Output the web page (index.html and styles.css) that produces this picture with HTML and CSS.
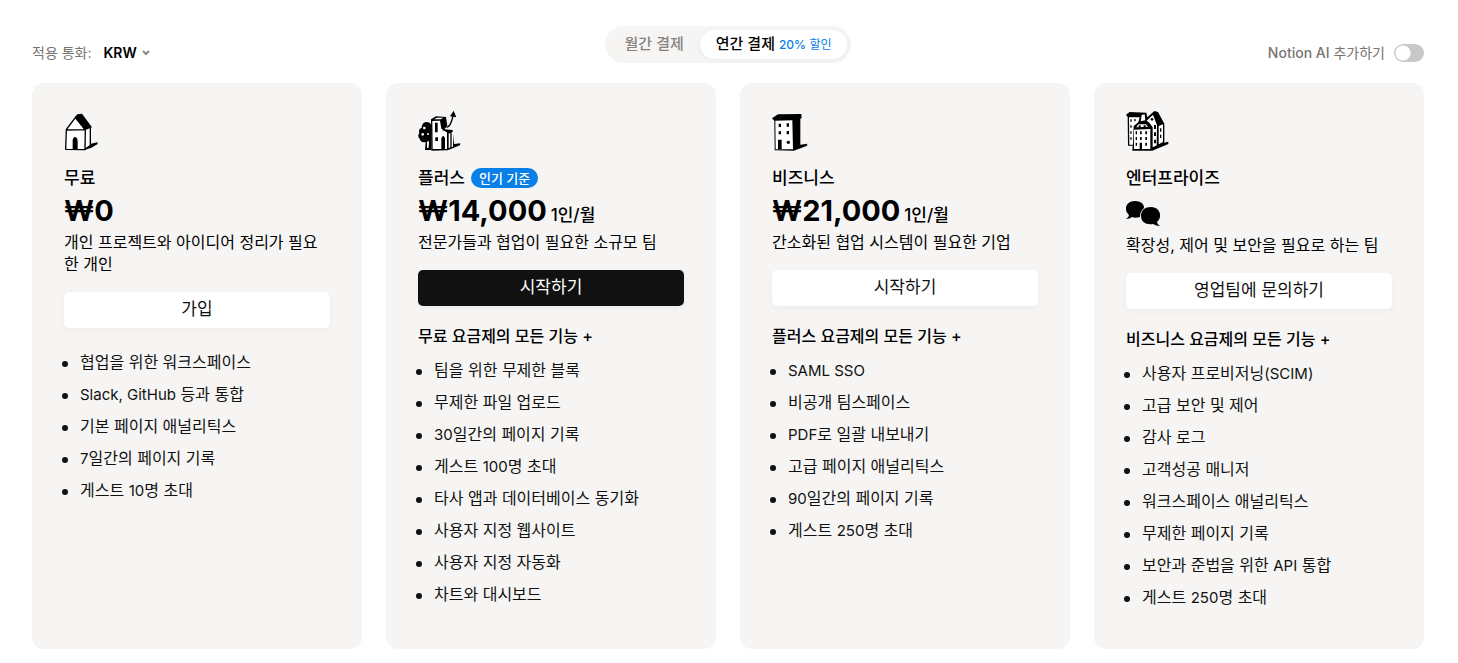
FILE: index.html
```html
<!DOCTYPE html>
<html lang="ko">
<head>
<meta charset="utf-8">
<meta name="viewport" content="width=device-width, initial-scale=1">
<title>요금제</title>
<link rel="stylesheet" href="styles.css">
</head>
<body>
<main class="page">
  <header class="toolbar">
    <div class="currency">
      <span>적용 통화:</span>
      <button class="currency-button" type="button">KRW
        <svg class="chevron" viewBox="0 0 8 6" aria-hidden="true"><path d="M1 1l3 3 3-3"/></svg>
      </button>
    </div>
    <div class="billing">
      <button class="billing-option" type="button">월간 결제</button>
      <button class="billing-option selected" type="button">연간 결제 <span class="discount"><span class="medium">20%</span> 할인</span></button>
    </div>
    <label class="ai"><span><span class="medium">Notion AI</span> 추가하기</span><input class="switch" type="checkbox" role="switch"></label>
  </header>

  <div class="plans">
    <section class="plan">
      <svg class="plan-icon" viewBox="27 24 132 132" aria-hidden="true">
        <path class="paper" d="M33 90L61 53 90 89 108 82 107 141 89 149 32 148z"/>
        <path class="ink" d="M60 50L70 43 81 41 111 82 90 91z"/>
        <path class="ink" d="M88 149L108 131 127 127 128 132 108 144z"/>
        <path class="paper" d="M91 93L106 85 105 136 91 146z"/>
        <path class="line" d="M33 90L61 53 90 89 34 90 32 148 90 149 91 91M61 53L70 43M106 84V137L90 148"/>
        <path class="ink" d="M53 148V122Q54 111 60 111T68 122V148z"/>
      </svg>
      <h2 class="plan-name">무료</h2>
      <p class="price">₩0</p>
      <p class="summary">개인 프로젝트와 아이디어 정리가 필요한 개인</p>
      <button class="action" type="button">가입</button>
      <ul class="features">
        <li>협업을 위한 워크스페이스</li>
        <li><span class="latin">Slack, GitHub</span> 등과 통합</li>
        <li>기본 페이지 애널리틱스</li>
        <li><span class="latin">7</span>일간의 페이지 기록</li>
        <li>게스트 <span class="latin">10</span>명 초대</li>
      </ul>
    </section>

    <section class="plan">
      <svg class="plan-icon" viewBox="24 24 132 132" aria-hidden="true">
        <path class="ink" d="M45 150L47 126Q34 130 29 117 21 108 28 99 24 87 35 83 35 68 49 66 60 66 64 76V150z"/>
        <circle class="paper" cx="43" cy="84" r="4"/><circle class="paper" cx="38" cy="103" r="4"/><circle class="paper" cx="54" cy="102" r="3"/><path class="paper" d="M51 125l6-2-1 20-5 1z"/>
        <path class="ink" d="M63 58L78 49 108 51 112 78 103 88 128 90 132 132 151 130 150 136 113 151 64 152z"/>
        <path class="paper" d="M67 63L90 62 94 86 111 97V147H68z"/>
        <path class="paper" d="M72 58L81 53 100 53 92 58zM116 101L121 98V142L116 145zM125 97L129 95V140L125 142z"/>
        <path class="ink" d="M75 68h8v29h-8zM76 112h8v11h-8zM94 147V115Q100 101 105 115V147zM96 90L113 90 127 94 113 97z"/>
        <path class="line" d="M110 82Q122 80 129 48"/>
        <path class="ink" d="M131 32L139 52 120 49z"/>
      </svg>
      <h2 class="plan-name">플러스 <span class="badge">인기 기준</span></h2>
      <p class="price">₩14,000 <span class="unit">1인/월</span></p>
      <p class="summary">전문가들과 협업이 필요한 소규모 팀</p>
      <button class="action primary" type="button">시작하기</button>
      <h3 class="includes">무료 요금제의 모든 기능 +</h3>
      <ul class="features">
        <li>팀을 위한 무제한 블록</li>
        <li>무제한 파일 업로드</li>
        <li><span class="latin">30</span>일간의 페이지 기록</li>
        <li>게스트 <span class="latin">100</span>명 초대</li>
        <li>타사 앱과 데이터베이스 동기화</li>
        <li>사용자 지정 웹사이트</li>
        <li>사용자 지정 자동화</li>
        <li>차트와 대시보드</li>
      </ul>
    </section>

    <section class="plan">
      <svg class="plan-icon" viewBox="21 24 132 132" aria-hidden="true">
        <path class="ink" d="M21 55L39 43 109 42 110 53 106 57V134L127 131 126 137 87 152 29 151 28 62z"/>
        <path class="paper" d="M31 62L82 61 84 148H32z"/>
        <path class="ink" d="M41 71h7v10h-7zM65 70h7v10h-7zM41 94h7v9h-7zM65 93h7v10h-7zM39 148V119h11V148z"/>
        <circle class="ink" cx="70" cy="127" r="5"/>
      </svg>
      <h2 class="plan-name">비즈니스</h2>
      <p class="price">₩21,000 <span class="unit">1인/월</span></p>
      <p class="summary">간소화된 협업 시스템이 필요한 기업</p>
      <button class="action" type="button">시작하기</button>
      <h3 class="includes">플러스 요금제의 모든 기능 +</h3>
      <ul class="features">
        <li><span class="latin">SAML SSO</span></li>
        <li>비공개 팀스페이스</li>
        <li><span class="latin">PDF</span>로 일괄 내보내기</li>
        <li>고급 페이지 애널리틱스</li>
        <li><span class="latin">90</span>일간의 페이지 기록</li>
        <li>게스트 <span class="latin">250</span>명 초대</li>
      </ul>
    </section>

    <section class="plan">
      <svg class="plan-icon" viewBox="24 24 132 132" aria-hidden="true">
        <path class="ink" d="M24 44L35 36 85 38 88 52 109 33 120 36 139 71V128L151 125 151 132 103 152H43L44 137H30L29 51z"/>
        <path class="paper" d="M33 52H65L61 67 47 78 45 134H34zM86 62L105 44 117 76 116 136 104 142V82L94 68zM122 78L135 73V126L122 133z"/>
        <path class="paper" d="M48 89L97 87V147H48zM61 73L84 73 90 80 55 82z"/>
        <path class="paper" d="M71 45L80 43 82 61 68 64z"/>
        <path class="ink" d="M37 58h4v7h-4zM49 57h4v7h-4zM37 76h4v7h-4zM37 94h4v7h-4zM37 112h4v7h-4zM53 94h4v9h-4zM66 94h5v9h-5zM82 94h5v9h-5zM53 111h4v9h-4zM66 111h5v9h-5zM82 111h5v9h-5zM53 128h4v9h-4zM82 128h5v9h-5zM65 149V128h7V149zM62 76h6v7h-6zM77 76h6v7h-6zM108 75h6v12h-6zM108 97h6v11h-6zM108 119h6v11h-6zM126 85h4v10h-4zM126 104h4v10h-4z"/>
        <circle class="ink" cx="102" cy="58" r="4"/>
      </svg>
      <h2 class="plan-name">엔터프라이즈</h2>
      <svg class="chat" viewBox="0 0 36 28" aria-hidden="true">
        <path class="ink" d="M9 1C15 1 18 4 18 8Q14 11 14 17C11 18 8 18 6 17Q4 19 0 19 3 17 3 15C-3 10 0 1 9 1z"/>
        <path class="ink" d="M25 7C34 7 37 17 31 22Q31 24 34 26 30 26 27 24C20 25 15 22 15 16S19 7 25 7z"/>
      </svg>
      <p class="summary">확장성, 제어 및 보안을 필요로 하는 팀</p>
      <button class="action" type="button">영업팀에 문의하기</button>
      <h3 class="includes">비즈니스 요금제의 모든 기능 +</h3>
      <ul class="features">
        <li>사용자 프로비저닝<span class="latin">(SCIM)</span></li>
        <li>고급 보안 및 제어</li>
        <li>감사 로그</li>
        <li>고객성공 매니저</li>
        <li>워크스페이스 애널리틱스</li>
        <li>무제한 페이지 기록</li>
        <li>보안과 준법을 위한 <span class="latin">API</span> 통합</li>
        <li>게스트 <span class="latin">250</span>명 초대</li>
      </ul>
    </section>
  </div>
</main>
</body>
</html>
```
FILE: styles.css
```css
* { box-sizing: border-box; }

body {
  margin: 0;
  background: #fff;
  color: #000;
  font-family: Inter, "Noto Sans CJK KR", sans-serif;
  font-size: 16px;
  line-height: 22px;
}

h2, h3, p, ul { margin: 0; padding: 0; }
button { font: inherit; color: inherit; border: 0; cursor: pointer; }

.page { padding: 26px 34px 14px 32px; }

.toolbar {
  display: grid;
  grid-template-columns: 1fr auto 1fr;
  align-items: end;
  margin-bottom: 20px;
  color: #78746f;
  font-size: 14px;
  line-height: 20px;
}

.currency { display: flex; align-items: center; gap: 12px; }

.currency-button {
  display: flex;
  align-items: center;
  gap: 5px;
  padding: 0;
  background: none;
  color: #000;
  font-weight: 600;
}

.chevron { width: 8px; height: 6px; fill: none; stroke: #8d8a86; stroke-width: 2; }

.billing {
  display: flex;
  padding: 4px;
  border-radius: 20px;
  background: #f6f5f4;
}

.billing-option {
  padding: 3px 16px 4px;
  border-radius: 16px;
  background: none;
  color: #86837e;
  font-size: 15px;
  font-weight: 500;
  line-height: 22px;
}

.billing-option.selected {
  background: #fff;
  color: #000;
  box-shadow: 0 1px 6px rgba(0, 0, 0, 0.05);
}

.discount { color: #097fe8; font-size: 12px; font-weight: 400; line-height: 14px; }
.medium { font-weight: 500; }

.ai { display: flex; align-items: center; justify-content: flex-end; gap: 9px; }

.switch {
  appearance: none;
  width: 30px;
  height: 18px;
  margin: 0;
  border-radius: 9px;
  background: radial-gradient(circle at 9px 9px, #fff 7px, #c8c8c8 8px);
}

.plans {
  display: grid;
  grid-template-columns: repeat(4, minmax(0, 1fr));
  gap: 24px;
}

.plan {
  display: flex;
  flex-direction: column;
  padding: 25px 32px 36px;
  border-radius: 12px;
  background: #f6f5f4;
}

.plan-icon { width: 44px; height: 44px; margin-bottom: 14px; }
.ink { fill: #000; }
.paper { fill: #fff; }
.line { fill: none; stroke: #000; stroke-width: 4; stroke-linejoin: round; }

.plan-name {
  display: flex;
  align-items: center;
  gap: 6px;
  height: 24px;
  font-size: 17px;
  font-weight: 500;
}

.badge {
  padding: 0 8px;
  border-radius: 10px;
  background: #097fe8;
  color: #fff;
  font-size: 13px;
  line-height: 20px;
}

.price {
  margin: 4px 0 3px;
  font-size: 29px;
  font-weight: 700;
  line-height: 34px;
  white-space: nowrap;
}

.unit { margin-left: -3px; font-size: 17px; font-weight: 500; line-height: 17px; }
.chat { width: 36px; height: 28px; margin: 10px 0 6px; }
.summary { font-size: 16px; }

.action {
  height: 36px;
  margin-top: 17px;
  padding: 0 12px 2px;
  border-radius: 5px;
  background: #fff;
  color: #111;
  font-size: 17px;
  box-shadow: 0 2px 6px rgba(0, 0, 0, 0.04);
}

.action.primary { background: #111; color: #fff; }

.includes { margin-top: 19px; font-size: 16px; font-weight: 500; }

.features {
  margin-top: 7px;
  padding-left: 16px;
  color: #111;
  line-height: 32px;
  list-style: none;
}

.features li::before {
  content: "";
  display: inline-block;
  width: 6px;
  height: 6px;
  margin: 0 12px 0 -18px;
  border-radius: 50%;
  background: #111;
  vertical-align: middle;
}

.action + .features { margin-top: 18px; }
.latin { font-size: 15px; line-height: 16px; }
```
